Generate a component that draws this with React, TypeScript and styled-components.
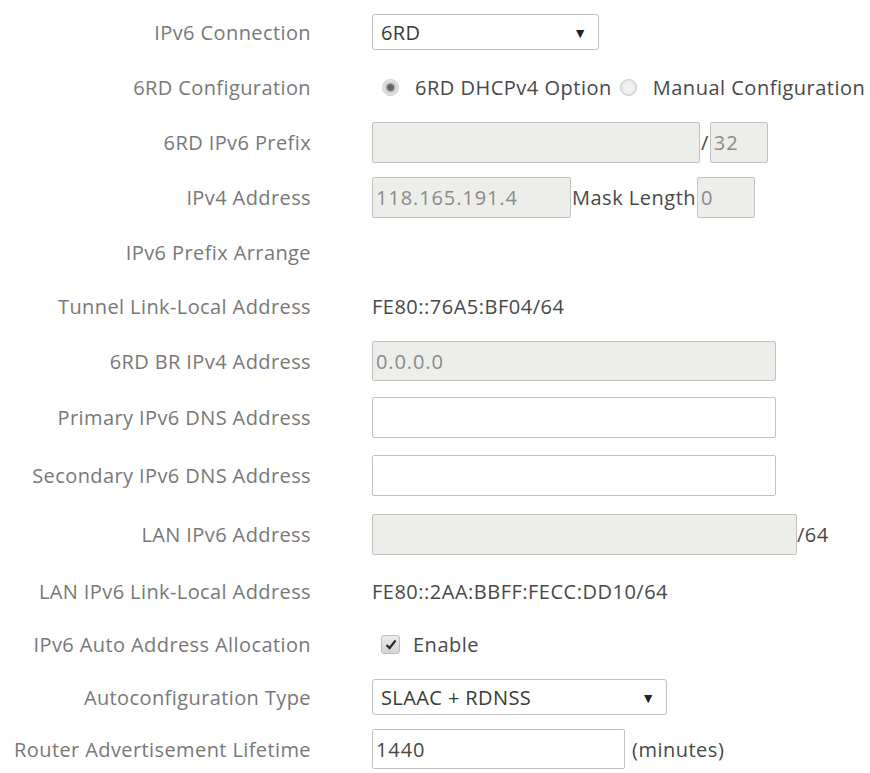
import React from 'react';
import styled, { createGlobalStyle, css } from 'styled-components';

const GlobalStyle = createGlobalStyle`
  html, body {
    margin: 0;
    padding: 0;
    background: #ffffff;
  }
  body {
    font-family: 'Open Sans', 'Liberation Sans', sans-serif;
  }
`;

const palette = {
  label: '#787878',
  value: '#484848',
  border: '#c2c2c2',
  disabledBg: '#ededea',
  disabledText: '#8a8a8a',
};

const Form = styled.div`
  padding-top: 4px;
  width: 870px;
`;

const Row = styled.div<{ h: number }>`
  display: flex;
  align-items: center;
  height: ${(p) => p.h}px;
`;

const Label = styled.div`
  width: 311px;
  flex-shrink: 0;
  text-align: right;
  font-size: 20px;
  letter-spacing: 0.4px;
  color: ${palette.label};
  white-space: nowrap;
`;

const Control = styled.div`
  margin-left: 61px;
  display: flex;
  align-items: center;
  font-size: 20px;
  letter-spacing: 0.5px;
  color: ${palette.value};
  white-space: nowrap;
`;

const TextInput = styled.input<{ w: number; h?: number }>`
  box-sizing: border-box;
  width: ${(p) => p.w}px;
  height: ${(p) => p.h || 41}px;
  margin: 0;
  padding: 0 3px;
  border: 1.5px solid ${palette.border};
  border-radius: 2px;
  background: #ffffff;
  font-family: inherit;
  font-size: 20px;
  letter-spacing: 0.9px;
  color: ${palette.value};
  outline: none;

  ${(p) =>
    p.disabled &&
    css`
      background: ${palette.disabledBg};
      color: ${palette.disabledText};
    `}
`;

const SelectBox = styled.div<{ w: number }>`
  position: relative;
  width: ${(p) => p.w}px;
  height: 36px;
`;

const SelectItem = styled.select`
  box-sizing: border-box;
  width: 100%;
  height: 100%;
  margin: 0;
  padding: 0 8px;
  appearance: none;
  border: 1.5px solid ${palette.border};
  border-radius: 3px;
  background: #ffffff;
  font-family: inherit;
  font-size: 20px;
  letter-spacing: 0.4px;
  color: #3a3a3a;
  outline: none;
`;

const SelectArrow = styled.span`
  position: absolute;
  right: 12px;
  top: 50%;
  transform: translateY(-50%);
  font-size: 14px;
  letter-spacing: 0;
  color: #222;
  pointer-events: none;
`;

const Suffix = styled.span<{ gap?: number }>`
  margin-left: ${(p) => p.gap || 0}px;
  margin-right: ${(p) => p.gap || 0}px;
  color: ${palette.value};
`;

const Spacer = styled.span<{ w: number }>`
  display: inline-block;
  width: ${(p) => p.w}px;
`;

const RadioDot = styled.span<{ checked?: boolean }>`
  box-sizing: border-box;
  width: 17px;
  height: 17px;
  border-radius: 50%;
  border: 1px solid #c8c8c8;
  background: ${(p) =>
    p.checked
      ? 'radial-gradient(circle, #666 0 3px, #b5b5b5 4px, #dedede 6px, #ececec 8px)'
      : 'radial-gradient(circle, #f2f2f2 0 4px, #e2e2e2 8px)'};
  flex-shrink: 0;
`;

const ChoiceText = styled.span<{ left: number }>`
  margin-left: ${(p) => p.left}px;
  color: ${palette.value};
`;

const CheckBox = styled.span`
  box-sizing: border-box;
  display: flex;
  align-items: center;
  justify-content: center;
  width: 19px;
  height: 19px;
  border: 1px solid #bdbdbd;
  border-radius: 3px;
  background: linear-gradient(#ececec, #d4d4d4);
`;

const Select = ({ w, value }: { w: number; value: string }) => (
  <SelectBox w={w}>
    <SelectItem defaultValue={value}>
      <option>{value}</option>
    </SelectItem>
    <SelectArrow>▼</SelectArrow>
  </SelectBox>
);

export default function App() {
  return (
    <Form>
      <GlobalStyle />
      <Row h={56}>
        <Label>IPv6 Connection</Label>
        <Control>
          <Select w={227} value="6RD" />
        </Control>
      </Row>
      <Row h={55}>
        <Label>6RD Configuration</Label>
        <Control>
          <Spacer w={10} />
          <RadioDot checked />
          <ChoiceText left={16}>6RD DHCPv4 Option</ChoiceText>
          <Spacer w={8} />
          <RadioDot />
          <ChoiceText left={16}>Manual Configuration</ChoiceText>
        </Control>
      </Row>
      <Row h={55}>
        <Label>6RD IPv6 Prefix</Label>
        <Control>
          <TextInput w={328} disabled defaultValue="" />
          <Suffix gap={1}>/</Suffix>
          <TextInput w={58} disabled defaultValue="32" />
        </Control>
      </Row>
      <Row h={55}>
        <Label>IPv4 Address</Label>
        <Control>
          <TextInput w={199} disabled defaultValue="118.165.191.4" />
          <Suffix gap={1}>Mask Length</Suffix>
          <TextInput w={58} disabled defaultValue="0" />
        </Control>
      </Row>
      <Row h={54}>
        <Label>IPv6 Prefix Arrange</Label>
      </Row>
      <Row h={54}>
        <Label>Tunnel Link-Local Address</Label>
        <Control>FE80::76A5:BF04/64</Control>
      </Row>
      <Row h={56}>
        <Label>6RD BR IPv4 Address</Label>
        <Control>
          <TextInput w={404} h={40} disabled defaultValue="0.0.0.0" />
        </Control>
      </Row>
      <Row h={57}>
        <Label>Primary IPv6 DNS Address</Label>
        <Control>
          <TextInput w={404} defaultValue="" />
        </Control>
      </Row>
      <Row h={59}>
        <Label>Secondary IPv6 DNS Address</Label>
        <Control>
          <TextInput w={404} defaultValue="" />
        </Control>
      </Row>
      <Row h={59}>
        <Label>LAN IPv6 Address</Label>
        <Control>
          <TextInput w={425} disabled defaultValue="" />
          <Suffix>/64</Suffix>
        </Control>
      </Row>
      <Row h={54}>
        <Label>LAN IPv6 Link-Local Address</Label>
        <Control>FE80::2AA:BBFF:FECC:DD10/64</Control>
      </Row>
      <Row h={53}>
        <Label>IPv6 Auto Address Allocation</Label>
        <Control>
          <Spacer w={9} />
          <CheckBox>
            <svg width="12" height="11" viewBox="0 0 12 11">
              <path d="M1.5 6 L4.6 9 L10.5 1.5" fill="none" stroke="#2b2b2b" strokeWidth="2.2" />
            </svg>
          </CheckBox>
          <ChoiceText left={13}>Enable</ChoiceText>
        </Control>
      </Row>
      <Row h={52}>
        <Label>Autoconfiguration Type</Label>
        <Control>
          <Select w={295} value="SLAAC + RDNSS" />
        </Control>
      </Row>
      <Row h={52}>
        <Label>Router Advertisement Lifetime</Label>
        <Control>
          <TextInput w={253} h={40} defaultValue="1440" />
          <Suffix gap={7}>(minutes)</Suffix>
        </Control>
      </Row>
    </Form>
  );
}
